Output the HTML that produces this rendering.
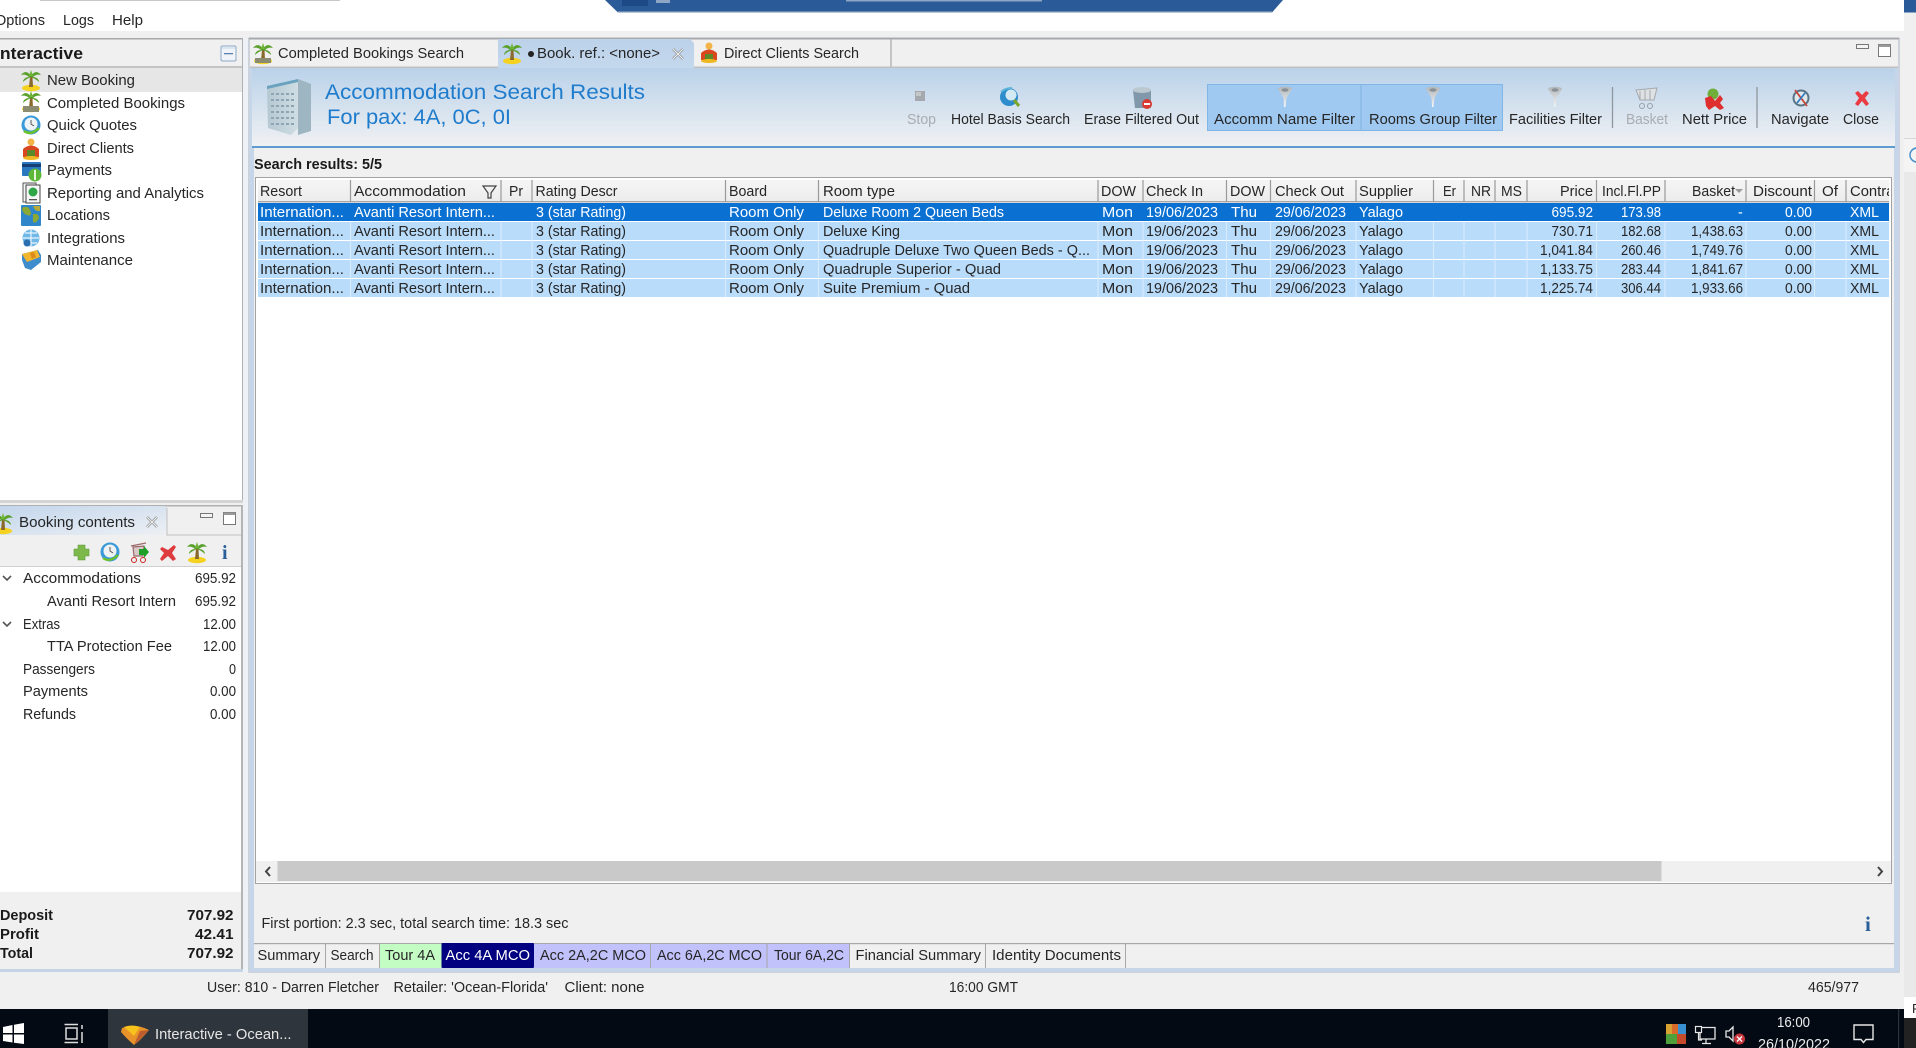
<!DOCTYPE html>
<html lang="en"><head><meta charset="utf-8"><title>Interactive - Ocean</title>
<style>
html,body{margin:0;padding:0;background:#f0f0f0;overflow:hidden;width:1916px;height:1048px}
svg{display:block;filter:blur(.3px)}
text{font-family:"Liberation Sans",sans-serif;font-size:14.3px;fill:#262626}
.b{font-weight:bold;fill:#1a1a1a}
.w{fill:#fff}
.g{fill:#a9adb1}
.h{font-size:21px;fill:#1f7ccc}
</style></head><body>
<svg width="1916" height="1048" viewBox="0 0 1916 1048" xmlns="http://www.w3.org/2000/svg">
<defs>
<linearGradient id="hd" x1="0" y1="0" x2="0" y2="1"><stop offset="0" stop-color="#bad2ea"/><stop offset="1" stop-color="#f0f1f3"/></linearGradient>
<linearGradient id="tb" x1="0" y1="0" x2="0" y2="1"><stop offset="0" stop-color="#bcd2ea"/><stop offset="1" stop-color="#c4d8ed"/></linearGradient>
<linearGradient id="tb2" x1="0" y1="0" x2="1" y2="1"><stop offset="0" stop-color="#c3d6ec"/><stop offset="1" stop-color="#edf0f4"/></linearGradient>
<linearGradient id="hdr" x1="0" y1="0" x2="0" y2="1"><stop offset="0" stop-color="#f5f5f5"/><stop offset="1" stop-color="#ececec"/></linearGradient>
<linearGradient id="bld" x1="0" y1="0" x2="1" y2="0"><stop offset="0" stop-color="#b5c8d2"/><stop offset="1" stop-color="#cfdde3"/></linearGradient>
<linearGradient id="fn" x1="0" y1="0" x2="0" y2="1"><stop offset="0" stop-color="#b2b7ba"/><stop offset="1" stop-color="#f3f5f6"/></linearGradient>
<g id="palm"><ellipse cx="0" cy="9" rx="9" ry="3.2" fill="#f4d21f"/><path d="M-1 -2 L1.5 -2 L2 8 L-2 8Z" fill="#8a6a2a"/><path d="M0 -3 C-3 -8 -7 -8 -10 -4 C-7 -5 -4 -4 -2 -2 C-5 -2 -8 0 -8 3 C-5 0 -2 -1 0 -2 C2 -1 5 0 8 3 C8 0 5 -2 2 -2 C4 -4 7 -5 10 -4 C7 -8 3 -8 0 -3Z" fill="#5aa02c"/><path d="M0 -9 L2 -3 L-2 -3Z" fill="#6fb536"/></g>
<g id="fun"><path d="M-7 -7 C-7 -10 7 -10 7 -7 L1.5 2 L0.5 11 L-1 11 L-1.5 2Z" fill="url(#fn)"/><ellipse cx="0" cy="-6" rx="3.500" ry="1.800" fill="#8b9297"/></g>
<clipPath id="r1"><rect x="258" y="203" width="1631" height="18"/></clipPath>
<clipPath id="r2"><rect x="258" y="222" width="1631" height="18"/></clipPath>
<clipPath id="r3"><rect x="258" y="241" width="1631" height="18"/></clipPath>
<clipPath id="r4"><rect x="258" y="260" width="1631" height="18"/></clipPath>
<clipPath id="r5"><rect x="258" y="279" width="1631" height="18"/></clipPath>
<clipPath id="hc"><rect x="1848" y="180" width="41" height="22"/></clipPath>
<clipPath id="dc"><rect x="1740" y="1010" width="110" height="38"/></clipPath>
</defs>

<!-- page base -->
<rect width="1916" height="1048" fill="#f0f0f0"/>
<rect width="1904" height="31" fill="#fff"/>
<path d="M605 0 L1283 0 L1272 12.5 L618 12.5Z" fill="#2a5a97"/>
<path d="M618 12 L1272 12" stroke="#8fa3bd" stroke-width="1.2"/>
<rect x="622" y="0" width="26" height="6" fill="#1d4a87"/>
<rect x="656" y="0" width="14" height="3" fill="#8ea6c6"/>
<rect x="846" y="0" width="196" height="1.500" fill="#8ea6c6"/>
<rect x="40" y="0" width="300" height="1" fill="#c8c8c8"/>
<rect x="1904" y="0" width="12" height="12.5" fill="#2a5a97"/>
<rect x="1904" y="12.5" width="12" height="126" fill="#f0f0f0"/>
<rect x="1904" y="138" width="12" height="1" fill="#d8d8d8"/>
<rect x="1904" y="139" width="12" height="33" fill="#f4f4f4"/>
<circle cx="1917" cy="155" r="7" fill="none" stroke="#4a90c8" stroke-width="1.5"/>
<rect x="1904" y="172" width="12" height="825" fill="#e9e9e9"/>
<rect x="1904" y="997" width="12" height="21" fill="#fff"/>
<text x="1912" y="1013" style="font-size:13px">F</text>
<rect x="1904" y="1018" width="12" height="30" fill="#222"/>

<!-- menu -->
<text x="-5" y="25" textLength="50" lengthAdjust="spacingAndGlyphs">Options</text>
<text x="63" y="25" textLength="31" lengthAdjust="spacingAndGlyphs">Logs</text>
<text x="112" y="25" textLength="31" lengthAdjust="spacingAndGlyphs">Help</text>

<!-- LEFT PANEL TOP -->
<rect x="0" y="38" width="243" height="462" fill="#fff"/>
<rect x="0" y="38" width="243" height="29" fill="#f0f0f0"/>
<rect x="0" y="38" width="243" height="1.5" fill="#a8a8a8"/>
<rect x="0" y="66" width="243" height="2" fill="#c4c4c4"/>
<rect x="242" y="38" width="1.5" height="462" fill="#b0b0b0"/>
<text class="b" x="-5" y="59" textLength="88" lengthAdjust="spacingAndGlyphs" style="font-size:17px">Interactive</text>
<rect x="221" y="46" width="15" height="15" rx="1.5" fill="#f0f4f9" stroke="#8ea8c6"/><rect x="224" y="53" width="9" height="1.3" fill="#5a82ae"/><rect x="222" y="47" width="13" height="2" fill="#dbe5f0"/>
<rect x="0" y="68" width="242" height="24" fill="#e6e6e6"/>

<use href="#palm" x="31" y="79"/>
<use href="#palm" x="31" y="100"/><rect x="23" y="106" width="16" height="6" fill="#8b8b70"/>
<circle cx="31" cy="125" r="9.5" fill="#3a9ad8"/><circle cx="31" cy="124" r="6.500" fill="#eef3f6"/><path d="M31 120 V124 L34 126" stroke="#555" fill="none"/><path d="M24 131 Q31 136 39 128" stroke="#6cc02a" stroke-width="2.5" fill="none"/>
<circle cx="31" cy="142" r="3.5" fill="#f2b347"/><path d="M23 149 Q31 142 39 149 L39 157 L23 157Z" fill="#d9471f"/><rect x="27" y="150" width="8" height="7" fill="#5c8a2a"/><ellipse cx="31" cy="158" rx="8" ry="2" fill="#f0b820"/>
<rect x="22" y="162" width="19" height="14" rx="1" fill="#2a78c0"/><rect x="22" y="164" width="19" height="3" fill="#143f70"/><circle cx="35" cy="175" r="6.5" fill="#5db83a"/><rect x="34" y="170" width="2" height="10" fill="#e8f7d8"/>
<rect x="23" y="183" width="13" height="19" fill="#f4f4f4" stroke="#555"/><rect x="26" y="185" width="14" height="18" fill="#f6f6f6" stroke="#444"/><circle cx="33" cy="192" r="4.5" fill="#2fa64a"/><rect x="29" y="199" width="8" height="1.3" fill="#555"/>
<rect x="21" y="205" width="20" height="21" rx="1" fill="#2f86c8"/><path d="M22 208 Q28 205 30 210 Q33 217 27 215 Q22 213 22 208Z M33 214 Q39 213 39 218 Q36 224 33 222Z" fill="#8ba832"/><path d="M33 206 L40 206 L40 211 Q35 212 33 206Z" fill="#b4a93a"/>
<circle cx="31" cy="238" r="8.5" fill="#6fb8e8"/><path d="M25 233 H37 M23 238 H39 M25 243 H37 M31 229 V247" stroke="#eaf5fc" stroke-width="1.2"/><circle cx="27" cy="243" r="3.5" fill="#2b6fb0"/>
<path d="M22 254 L38 250 L41 255 L41 262 L31 270 L25 268 L22 260Z" fill="#3f8ccc"/><path d="M22 254 L37 250 L40 257 L27 262Z" fill="#f1b62d"/><path d="M30 253 L34 252 L36 257 L32 259Z" fill="#d98a1a"/>

<text x="47" y="85" textLength="88" lengthAdjust="spacingAndGlyphs">New Booking</text>
<text x="47" y="108" textLength="138" lengthAdjust="spacingAndGlyphs">Completed Bookings</text>
<text x="47" y="130" textLength="90" lengthAdjust="spacingAndGlyphs">Quick Quotes</text>
<text x="47" y="153" textLength="87" lengthAdjust="spacingAndGlyphs">Direct Clients</text>
<text x="47" y="175" textLength="65" lengthAdjust="spacingAndGlyphs">Payments</text>
<text x="47" y="198" textLength="157" lengthAdjust="spacingAndGlyphs">Reporting and Analytics</text>
<text x="47" y="220" textLength="63" lengthAdjust="spacingAndGlyphs">Locations</text>
<text x="47" y="243" textLength="78" lengthAdjust="spacingAndGlyphs">Integrations</text>
<text x="47" y="265" textLength="86" lengthAdjust="spacingAndGlyphs">Maintenance</text>

<!-- LEFT PANEL BOTTOM -->
<rect x="0" y="500" width="243" height="3" fill="#d4d4d4"/>
<rect x="0" y="505" width="243" height="62" fill="#f0f0f0"/>
<rect x="0" y="505" width="243" height="1.5" fill="#b0b0b0"/>
<path d="M0 506 H165 L167 508 V535 H0Z" fill="url(#tb2)"/>
<path d="M167 508 V535 H243" stroke="#c0c0c0" fill="none"/>
<use href="#palm" x="3" y="522"/>
<text x="19" y="527" textLength="116" lengthAdjust="spacingAndGlyphs">Booking contents</text>
<path d="M147 517 L157 527 M157 517 L147 527" stroke="#8e9296" stroke-width="2.6"/><path d="M147 517 L157 527 M157 517 L147 527" stroke="#f4f4f4" stroke-width="1"/>
<rect x="200.500" y="513.500" width="12" height="4" fill="#f4f4f4" stroke="#777"/>
<rect x="223.500" y="512.500" width="12" height="12" fill="#fff" stroke="#777"/><rect x="223.500" y="512.500" width="12" height="2.500" fill="#999"/>
<rect x="0" y="567" width="241" height="325" fill="#fff"/>
<rect x="0" y="566" width="241" height="1" fill="#d0d0d0"/>
<rect x="241" y="505" width="2" height="465" fill="#b4b4b4"/>
<path d="M78 545 H85 V549 H89 V556 H85 V560 H78 V556 H74 V549 H78Z" fill="#7cb84a" stroke="#5f9a38" stroke-width=".6"/>
<circle cx="110" cy="552" r="9.5" fill="#3a9ad8"/><circle cx="110" cy="551" r="6.500" fill="#eef2f4"/><path d="M110 547 V551 L113 553" stroke="#555" fill="none"/><path d="M103 558 Q110 563 118 555" stroke="#6cc02a" stroke-width="2.2" fill="none"/>
<path d="M131 546 L146 543 M133 547 L144 546 L143 556 L134 556Z" stroke="#9a6a6a" fill="#d8c8c8" stroke-width="1.2"/><circle cx="134" cy="560" r="2.5" fill="none" stroke="#c22"/><circle cx="143" cy="560" r="2.5" fill="none" stroke="#c22"/><path d="M139 549 H144 V546 L149 552 L144 558 V555 H139Z" fill="#1ea028"/>
<path d="M162 547 L168 550 L174 545 L176 547 L172 553 L176 559 L173 561 L168 556 L162 561 L160 559 L164 553 L160 549Z" fill="#de3b3f"/>
<use href="#palm" x="197" y="551"/>
<text x="222" y="559" style="font-family:'Liberation Serif',serif;font-weight:bold;font-size:20px;fill:#2a6099">i</text>

<path d="M3 576 L7 580 L11 576 M3 622 L7 626 L11 622" stroke="#555" stroke-width="1.6" fill="none"/>
<text x="23" y="583" textLength="118" lengthAdjust="spacingAndGlyphs">Accommodations</text>
<text x="195" y="583" textLength="41" lengthAdjust="spacingAndGlyphs">695.92</text>
<text x="47" y="606" textLength="129" lengthAdjust="spacingAndGlyphs">Avanti Resort Intern</text>
<text x="195" y="606" textLength="41" lengthAdjust="spacingAndGlyphs">695.92</text>
<text x="23" y="629" textLength="37" lengthAdjust="spacingAndGlyphs">Extras</text>
<text x="203" y="629" textLength="33" lengthAdjust="spacingAndGlyphs">12.00</text>
<text x="47" y="651" textLength="125" lengthAdjust="spacingAndGlyphs">TTA Protection Fee</text>
<text x="203" y="651" textLength="33" lengthAdjust="spacingAndGlyphs">12.00</text>
<text x="23" y="674" textLength="72" lengthAdjust="spacingAndGlyphs">Passengers</text>
<text x="229" y="674" textLength="7" lengthAdjust="spacingAndGlyphs">0</text>
<text x="23" y="696" textLength="65" lengthAdjust="spacingAndGlyphs">Payments</text>
<text x="210" y="696" textLength="26" lengthAdjust="spacingAndGlyphs">0.00</text>
<text x="23" y="719" textLength="53" lengthAdjust="spacingAndGlyphs">Refunds</text>
<text x="210" y="719" textLength="26" lengthAdjust="spacingAndGlyphs">0.00</text>

<text class="b" x="0" y="920" textLength="53" lengthAdjust="spacingAndGlyphs">Deposit</text>
<text class="b" x="187" y="920" textLength="46.500" lengthAdjust="spacingAndGlyphs">707.92</text>
<text class="b" x="0" y="939" textLength="39" lengthAdjust="spacingAndGlyphs">Profit</text>
<text class="b" x="195" y="939" textLength="38.500" lengthAdjust="spacingAndGlyphs">42.41</text>
<text class="b" x="0" y="958" textLength="33" lengthAdjust="spacingAndGlyphs">Total</text>
<text class="b" x="187" y="958" textLength="46.500" lengthAdjust="spacingAndGlyphs">707.92</text>
<rect x="0" y="969" width="243" height="3" fill="#c5d5e6"/>
<rect x="243" y="38" width="5" height="934" fill="#eef1f5"/>

<!-- RIGHT PANEL -->
<rect x="249" y="38" width="1650" height="934" fill="#f0f0f0" stroke="#a9b4bf" stroke-width="1"/>
<rect x="249" y="38" width="1650" height="1.500" fill="#a8a8a8"/>
<rect x="249" y="68" width="5" height="904" fill="#c6d6e8"/>
<rect x="1894" y="68" width="5" height="904" fill="#c6d6e8"/>
<path d="M498 68 V39 H690 L694 43 V68Z" fill="url(#tb)"/>
<path d="M891 39 V67" stroke="#a8a8a8" stroke-width="1.200"/>
<rect x="250" y="66.500" width="248" height="1.500" fill="#c0c0c0"/>
<rect x="694" y="66.500" width="1204" height="1.500" fill="#c0c0c0"/>
<use href="#palm" x="263" y="52"/><rect x="255" y="58" width="16" height="5" fill="#8b8b70"/>
<text x="278" y="58" textLength="186" lengthAdjust="spacingAndGlyphs">Completed Bookings Search</text>
<use href="#palm" x="512" y="52"/>
<circle cx="531" cy="54" r="3" fill="#222"/>
<text x="537" y="58" textLength="123" lengthAdjust="spacingAndGlyphs">Book. ref.: &lt;none&gt;</text>
<path d="M673 49 L683 59 M683 49 L673 59" stroke="#8e9296" stroke-width="2.600"/><path d="M673 49 L683 59 M683 49 L673 59" stroke="#f4f4f4" stroke-width="1"/>
<circle cx="709" cy="46" r="3.500" fill="#f2b347"/><path d="M701 53 Q709 46 717 53 L717 60 L701 60Z" fill="#d9471f"/><rect x="705" y="54" width="8" height="6" fill="#5c8a2a"/><ellipse cx="709" cy="61" rx="8" ry="2" fill="#f0b820"/>
<text x="724" y="58" textLength="135" lengthAdjust="spacingAndGlyphs">Direct Clients Search</text>
<rect x="1856.500" y="44.500" width="12" height="4" fill="#f4f4f4" stroke="#777"/>
<rect x="1878.500" y="44.500" width="12" height="12" fill="#fff" stroke="#777"/><rect x="1878.500" y="44.500" width="12" height="2.500" fill="#999"/>

<!-- Header band -->
<rect x="252" y="68" width="1643" height="78" fill="url(#hd)"/>
<rect x="252" y="146" width="1643" height="2" fill="#5d9bd0"/>
<path d="M267 86 L298 79 L298 128 L291 135 L268 128Z" fill="url(#bld)"/>
<path d="M298 79 L311 84 L311 131 L298 135Z" fill="#9eb6c2"/>
<path d="M267 86 L298 79 L298 82 L267 89Z" fill="#6aa2c0"/>
<path d="M271 94 H295 M271 100 H295 M271 106 H295 M271 112 H295 M271 118 H295 M271 124 H295" stroke="#8ea6b3" stroke-width="2" stroke-dasharray="3 2"/>
<text class="h" x="325" y="99" textLength="320" lengthAdjust="spacingAndGlyphs">Accommodation Search Results</text>
<text class="h" x="327" y="124" textLength="184" lengthAdjust="spacingAndGlyphs">For pax: 4A, 0C, 0I</text>

<!-- toolbar -->
<rect x="1207.500" y="84.500" width="295" height="46" fill="#9fc9f0" stroke="#82b6e6"/>
<path d="M1361 85 V130" stroke="#7fb2e2"/>
<rect x="915" y="91" width="10" height="10" fill="#a5a9ad"/><rect x="916" y="92" width="5" height="4" fill="#c4c6c8"/>
<circle cx="1009" cy="97" r="9" fill="#2d8ccc"/><circle cx="1011" cy="95" r="5.500" fill="#d4eaf2"/><path d="M1014 100 L1019 106" stroke="#7aa62a" stroke-width="3"/><path d="M1001 92 Q1005 88 1012 88" stroke="#5cb5d8" stroke-width="2" fill="none"/>
<path d="M1133 90 Q1142 86 1151 90 L1151 108 L1135 108 Z" fill="#8098aa"/><ellipse cx="1142" cy="90" rx="9" ry="3" fill="#bcc8d0"/><circle cx="1147" cy="104" r="5" fill="#d93a32"/><rect x="1144" y="103" width="6" height="2" fill="#fff"/>
<use href="#fun" x="1285" y="96"/>
<use href="#fun" x="1433" y="96"/>
<use href="#fun" x="1555" y="96"/>
<path d="M1612.500 87 V128 M1757 87 V128" stroke="#8f979e" stroke-width="1.300"/>
<path d="M1636 90 L1657 88 L1654 100 L1640 100Z M1640 91 V100 M1645 90 V100 M1650 90 V100" fill="#dfe2e5" stroke="#a3a8ad"/><circle cx="1642" cy="106" r="2.500" fill="none" stroke="#9a9fa4"/><circle cx="1650" cy="106" r="2.500" fill="none" stroke="#9a9fa4"/>
<circle cx="1713" cy="94" r="5.500" fill="#6fae38"/><path d="M1705 98 L1711 96 L1715 101 L1720 95 L1723 99 L1720 103 L1724 108 L1720 110 L1715 106 L1709 110 L1706 106Z" fill="#df2e2e"/>
<circle cx="1801" cy="98" r="7.500" fill="#dfe8ec" stroke="#5a7484" stroke-width="2"/><path d="M1795 90 L1807 106" stroke="#c6443a" stroke-width="1.800"/><path d="M1797 103 L1805 93" stroke="#2f7cc4" stroke-width="1.800"/>
<path d="M1855 93 L1858 91 L1862 95 L1866 91 L1869 93 L1865 98 L1869 104 L1866 106 L1862 101 L1858 106 L1855 104 L1859 98Z" fill="#ea3a42"/>

<text class="g" x="907" y="124" textLength="29" lengthAdjust="spacingAndGlyphs">Stop</text>
<text x="951" y="124" textLength="119" lengthAdjust="spacingAndGlyphs">Hotel Basis Search</text>
<text x="1084" y="124" textLength="115" lengthAdjust="spacingAndGlyphs">Erase Filtered Out</text>
<text x="1214" y="124" textLength="141" lengthAdjust="spacingAndGlyphs">Accomm Name Filter</text>
<text x="1369" y="124" textLength="128" lengthAdjust="spacingAndGlyphs">Rooms Group Filter</text>
<text x="1509" y="124" textLength="93" lengthAdjust="spacingAndGlyphs">Facilities Filter</text>
<text class="g" x="1626" y="124" textLength="42" lengthAdjust="spacingAndGlyphs">Basket</text>
<text x="1682" y="124" textLength="65" lengthAdjust="spacingAndGlyphs">Nett Price</text>
<text x="1771" y="124" textLength="58" lengthAdjust="spacingAndGlyphs">Navigate</text>
<text x="1843" y="124" textLength="36" lengthAdjust="spacingAndGlyphs">Close</text>

<text class="b" x="254" y="169" textLength="128" lengthAdjust="spacingAndGlyphs">Search results: 5/5</text>

<!-- TABLE -->
<rect x="255.500" y="177.500" width="1636" height="706" fill="#fff" stroke="#a3a3a3"/>
<rect x="258" y="180" width="1631" height="21" fill="url(#hdr)"/>
<rect x="258" y="201" width="1631" height="1.500" fill="#a8a8a8"/>
<rect x="258" y="203" width="1631" height="18" fill="#0a70d2"/>
<rect x="258" y="222" width="1631" height="18" fill="#badcfb"/>
<rect x="258" y="241" width="1631" height="18" fill="#badcfb"/>
<rect x="258" y="260" width="1631" height="18" fill="#badcfb"/>
<rect x="258" y="279" width="1631" height="18" fill="#badcfb"/>
<path d="M350.500 180V202 M501 180V202 M532 180V202 M725.500 180V202 M818.500 180V202 M1098 180V202 M1143 180V202 M1226.500 180V202 M1270.500 180V202 M1356 180V202 M1433.500 180V202 M1464 180V202 M1495 180V202 M1527 180V202 M1596.500 180V202 M1665 180V202 M1746 180V202 M1814.500 180V202 M1846 180V202" stroke="#9a9a9a" stroke-width="1.200"/>
<path d="M350.500 222V297 M501 222V297 M532 222V297 M725.500 222V297 M818.500 222V297 M1098 222V297 M1143 222V297 M1226.500 222V297 M1270.500 222V297 M1356 222V297 M1433.500 222V297 M1464 222V297 M1495 222V297 M1527 222V297 M1596.500 222V297 M1665 222V297 M1746 222V297 M1814.500 222V297 M1846 222V297" stroke="#d8ecfd" stroke-width="1"/>
<text x="260" y="196" textLength="42" lengthAdjust="spacingAndGlyphs">Resort</text>
<text x="354" y="196" textLength="112" lengthAdjust="spacingAndGlyphs">Accommodation</text>
<path d="M483 186 H496 L491 193 V198 L488 198 V193Z" fill="none" stroke="#444" stroke-width="1.200"/>
<text x="509" y="196" textLength="14" lengthAdjust="spacingAndGlyphs">Pr</text>
<text x="535.500" y="196" textLength="82" lengthAdjust="spacingAndGlyphs">Rating Descr</text>
<text x="729" y="196" textLength="38" lengthAdjust="spacingAndGlyphs">Board</text>
<text x="823" y="196" textLength="72" lengthAdjust="spacingAndGlyphs">Room type</text>
<text x="1101" y="196" textLength="35" lengthAdjust="spacingAndGlyphs">DOW</text>
<text x="1146" y="196" textLength="57" lengthAdjust="spacingAndGlyphs">Check In</text>
<text x="1230" y="196" textLength="35" lengthAdjust="spacingAndGlyphs">DOW</text>
<text x="1275" y="196" textLength="69" lengthAdjust="spacingAndGlyphs">Check Out</text>
<text x="1359" y="196" textLength="54" lengthAdjust="spacingAndGlyphs">Supplier</text>
<text x="1443" y="196" textLength="13" lengthAdjust="spacingAndGlyphs">Er</text>
<text x="1471" y="196" textLength="20" lengthAdjust="spacingAndGlyphs">NR</text>
<text x="1501" y="196" textLength="21" lengthAdjust="spacingAndGlyphs">MS</text>
<text x="1560" y="196" textLength="33" lengthAdjust="spacingAndGlyphs">Price</text>
<text x="1602" y="196" textLength="59" lengthAdjust="spacingAndGlyphs">Incl.Fl.PP</text>
<text x="1692" y="196" textLength="43" lengthAdjust="spacingAndGlyphs">Basket</text>
<path d="M1735 189 H1743 L1739 193Z" fill="#9a9a9a"/>
<text x="1753" y="196" textLength="59" lengthAdjust="spacingAndGlyphs">Discount</text>
<text x="1822" y="196" textLength="16" lengthAdjust="spacingAndGlyphs">Of</text>
<g clip-path="url(#hc)"><text x="1850" y="196" textLength="56" lengthAdjust="spacingAndGlyphs">Contract</text></g>

<g clip-path="url(#r1)">
<text class="w" x="260" y="217" textLength="84" lengthAdjust="spacingAndGlyphs">Internation...</text>
<text class="w" x="354" y="217" textLength="141" lengthAdjust="spacingAndGlyphs">Avanti Resort Intern...</text>
<text class="w" x="536" y="217" textLength="90" lengthAdjust="spacingAndGlyphs">3 (star Rating)</text>
<text class="w" x="729" y="217" textLength="75" lengthAdjust="spacingAndGlyphs">Room Only</text>
<text class="w" x="823" y="217" textLength="181" lengthAdjust="spacingAndGlyphs">Deluxe Room 2 Queen Beds</text>
<text class="w" x="1102" y="217" textLength="31" lengthAdjust="spacingAndGlyphs">Mon</text>
<text class="w" x="1146" y="217" textLength="72" lengthAdjust="spacingAndGlyphs">19/06/2023</text>
<text class="w" x="1231" y="217" textLength="26" lengthAdjust="spacingAndGlyphs">Thu</text>
<text class="w" x="1275" y="217" textLength="71" lengthAdjust="spacingAndGlyphs">29/06/2023</text>
<text class="w" x="1359" y="217" textLength="44" lengthAdjust="spacingAndGlyphs">Yalago</text>
<text class="w" x="1551.500" y="217" textLength="41.500" lengthAdjust="spacingAndGlyphs">695.92</text>
<text class="w" x="1621" y="217" textLength="40" lengthAdjust="spacingAndGlyphs">173.98</text>
<text class="w" x="1738" y="217">-</text>
<text class="w" x="1785" y="217" textLength="27" lengthAdjust="spacingAndGlyphs">0.00</text>
<text class="w" x="1850" y="217" textLength="29" lengthAdjust="spacingAndGlyphs">XML</text>
</g>
<g clip-path="url(#r2)">
<text x="260" y="236" textLength="84" lengthAdjust="spacingAndGlyphs">Internation...</text>
<text x="354" y="236" textLength="141" lengthAdjust="spacingAndGlyphs">Avanti Resort Intern...</text>
<text x="536" y="236" textLength="90" lengthAdjust="spacingAndGlyphs">3 (star Rating)</text>
<text x="729" y="236" textLength="75" lengthAdjust="spacingAndGlyphs">Room Only</text>
<text x="823" y="236" textLength="77" lengthAdjust="spacingAndGlyphs">Deluxe King</text>
<text x="1102" y="236" textLength="31" lengthAdjust="spacingAndGlyphs">Mon</text>
<text x="1146" y="236" textLength="72" lengthAdjust="spacingAndGlyphs">19/06/2023</text>
<text x="1231" y="236" textLength="26" lengthAdjust="spacingAndGlyphs">Thu</text>
<text x="1275" y="236" textLength="71" lengthAdjust="spacingAndGlyphs">29/06/2023</text>
<text x="1359" y="236" textLength="44" lengthAdjust="spacingAndGlyphs">Yalago</text>
<text x="1551.500" y="236" textLength="41.500" lengthAdjust="spacingAndGlyphs">730.71</text>
<text x="1621" y="236" textLength="40" lengthAdjust="spacingAndGlyphs">182.68</text>
<text x="1691" y="236" textLength="52" lengthAdjust="spacingAndGlyphs">1,438.63</text>
<text x="1785" y="236" textLength="27" lengthAdjust="spacingAndGlyphs">0.00</text>
<text x="1850" y="236" textLength="29" lengthAdjust="spacingAndGlyphs">XML</text>
</g>
<g clip-path="url(#r3)">
<text x="260" y="255" textLength="84" lengthAdjust="spacingAndGlyphs">Internation...</text>
<text x="354" y="255" textLength="141" lengthAdjust="spacingAndGlyphs">Avanti Resort Intern...</text>
<text x="536" y="255" textLength="90" lengthAdjust="spacingAndGlyphs">3 (star Rating)</text>
<text x="729" y="255" textLength="75" lengthAdjust="spacingAndGlyphs">Room Only</text>
<text x="823" y="255" textLength="267" lengthAdjust="spacingAndGlyphs">Quadruple Deluxe Two Queen Beds - Q...</text>
<text x="1102" y="255" textLength="31" lengthAdjust="spacingAndGlyphs">Mon</text>
<text x="1146" y="255" textLength="72" lengthAdjust="spacingAndGlyphs">19/06/2023</text>
<text x="1231" y="255" textLength="26" lengthAdjust="spacingAndGlyphs">Thu</text>
<text x="1275" y="255" textLength="71" lengthAdjust="spacingAndGlyphs">29/06/2023</text>
<text x="1359" y="255" textLength="44" lengthAdjust="spacingAndGlyphs">Yalago</text>
<text x="1540" y="255" textLength="53" lengthAdjust="spacingAndGlyphs">1,041.84</text>
<text x="1621" y="255" textLength="40" lengthAdjust="spacingAndGlyphs">260.46</text>
<text x="1691" y="255" textLength="52" lengthAdjust="spacingAndGlyphs">1,749.76</text>
<text x="1785" y="255" textLength="27" lengthAdjust="spacingAndGlyphs">0.00</text>
<text x="1850" y="255" textLength="29" lengthAdjust="spacingAndGlyphs">XML</text>
</g>
<g clip-path="url(#r4)">
<text x="260" y="274" textLength="84" lengthAdjust="spacingAndGlyphs">Internation...</text>
<text x="354" y="274" textLength="141" lengthAdjust="spacingAndGlyphs">Avanti Resort Intern...</text>
<text x="536" y="274" textLength="90" lengthAdjust="spacingAndGlyphs">3 (star Rating)</text>
<text x="729" y="274" textLength="75" lengthAdjust="spacingAndGlyphs">Room Only</text>
<text x="823" y="274" textLength="178" lengthAdjust="spacingAndGlyphs">Quadruple Superior - Quad</text>
<text x="1102" y="274" textLength="31" lengthAdjust="spacingAndGlyphs">Mon</text>
<text x="1146" y="274" textLength="72" lengthAdjust="spacingAndGlyphs">19/06/2023</text>
<text x="1231" y="274" textLength="26" lengthAdjust="spacingAndGlyphs">Thu</text>
<text x="1275" y="274" textLength="71" lengthAdjust="spacingAndGlyphs">29/06/2023</text>
<text x="1359" y="274" textLength="44" lengthAdjust="spacingAndGlyphs">Yalago</text>
<text x="1540" y="274" textLength="53" lengthAdjust="spacingAndGlyphs">1,133.75</text>
<text x="1621" y="274" textLength="40" lengthAdjust="spacingAndGlyphs">283.44</text>
<text x="1691" y="274" textLength="52" lengthAdjust="spacingAndGlyphs">1,841.67</text>
<text x="1785" y="274" textLength="27" lengthAdjust="spacingAndGlyphs">0.00</text>
<text x="1850" y="274" textLength="29" lengthAdjust="spacingAndGlyphs">XML</text>
</g>
<g clip-path="url(#r5)">
<text x="260" y="293" textLength="84" lengthAdjust="spacingAndGlyphs">Internation...</text>
<text x="354" y="293" textLength="141" lengthAdjust="spacingAndGlyphs">Avanti Resort Intern...</text>
<text x="536" y="293" textLength="90" lengthAdjust="spacingAndGlyphs">3 (star Rating)</text>
<text x="729" y="293" textLength="75" lengthAdjust="spacingAndGlyphs">Room Only</text>
<text x="823" y="293" textLength="147" lengthAdjust="spacingAndGlyphs">Suite Premium - Quad</text>
<text x="1102" y="293" textLength="31" lengthAdjust="spacingAndGlyphs">Mon</text>
<text x="1146" y="293" textLength="72" lengthAdjust="spacingAndGlyphs">19/06/2023</text>
<text x="1231" y="293" textLength="26" lengthAdjust="spacingAndGlyphs">Thu</text>
<text x="1275" y="293" textLength="71" lengthAdjust="spacingAndGlyphs">29/06/2023</text>
<text x="1359" y="293" textLength="44" lengthAdjust="spacingAndGlyphs">Yalago</text>
<text x="1540" y="293" textLength="53" lengthAdjust="spacingAndGlyphs">1,225.74</text>
<text x="1621" y="293" textLength="40" lengthAdjust="spacingAndGlyphs">306.44</text>
<text x="1691" y="293" textLength="52" lengthAdjust="spacingAndGlyphs">1,933.66</text>
<text x="1785" y="293" textLength="27" lengthAdjust="spacingAndGlyphs">0.00</text>
<text x="1850" y="293" textLength="29" lengthAdjust="spacingAndGlyphs">XML</text>
</g>

<!-- scrollbar -->
<rect x="256" y="861" width="1635" height="21" fill="#f0f0f0"/>
<rect x="277.500" y="861" width="1384" height="20" fill="#c9c9c9"/>
<path d="M270 867 L266 871.500 L270 876 M1878 867 L1882 871.500 L1878 876" stroke="#444" stroke-width="2" fill="none"/>

<text x="261.500" y="928" textLength="307" lengthAdjust="spacingAndGlyphs">First portion: 2.3 sec, total search time: 18.3 sec</text>
<text x="1865" y="931" style="font-family:'Liberation Serif',serif;font-weight:bold;font-size:21px;fill:#2a6099">i</text>

<!-- bottom tabs -->
<rect x="254" y="943" width="1640" height="1.200" fill="#a8a8a8"/>
<rect x="380" y="944" width="62" height="24" fill="#c4fdc4"/>
<rect x="441.500" y="943" width="92.500" height="25" rx="1" fill="#000080"/>
<rect x="534" y="944" width="116" height="24" fill="#c1c1fc"/>
<rect x="651" y="944" width="116" height="24" fill="#c1c1fc"/>
<rect x="767.500" y="944" width="82" height="24" fill="#c1c1fc"/>
<path d="M325.500 944V968 M379.500 944V968 M650.500 944V968 M767 944V968 M849.500 944V968 M985.500 944V968 M1125.500 944V968" stroke="#a8a8a8"/>
<rect x="254" y="968" width="1645" height="4" fill="#c6d6e8"/>
<text x="257.500" y="960" textLength="62.500" lengthAdjust="spacingAndGlyphs">Summary</text>
<text x="330.500" y="960" textLength="43" lengthAdjust="spacingAndGlyphs">Search</text>
<text x="385" y="960" textLength="50" lengthAdjust="spacingAndGlyphs">Tour 4A</text>
<text class="w" x="445.500" y="960" textLength="84.500" lengthAdjust="spacingAndGlyphs">Acc 4A MCO</text>
<text x="540" y="960" textLength="106" lengthAdjust="spacingAndGlyphs">Acc 2A,2C MCO</text>
<text x="657" y="960" textLength="105" lengthAdjust="spacingAndGlyphs">Acc 6A,2C MCO</text>
<text x="774" y="960" textLength="70" lengthAdjust="spacingAndGlyphs">Tour 6A,2C</text>
<text x="855.500" y="960" textLength="125.500" lengthAdjust="spacingAndGlyphs">Financial Summary</text>
<text x="992" y="960" textLength="129" lengthAdjust="spacingAndGlyphs">Identity Documents</text>

<!-- status -->
<text x="207" y="992" textLength="172" lengthAdjust="spacingAndGlyphs">User: 810 - Darren Fletcher</text>
<text x="393.500" y="992" textLength="154.500" lengthAdjust="spacingAndGlyphs">Retailer: 'Ocean-Florida'</text>
<text x="564.500" y="992" textLength="80" lengthAdjust="spacingAndGlyphs">Client: none</text>
<text x="949" y="992" textLength="69" lengthAdjust="spacingAndGlyphs">16:00 GMT</text>
<text x="1808" y="992" textLength="51" lengthAdjust="spacingAndGlyphs">465/977</text>

<!-- taskbar -->
<rect x="0" y="1009" width="1904" height="39" fill="#030a13"/>
<rect x="1898" y="1009" width="1.200" height="39" fill="#2d3238"/>
<rect x="108" y="1009" width="200" height="39" fill="#2f353c"/>
<path d="M3 1027 L12.500 1025 V1033 H3Z M14 1024.700 L24 1023 V1033 H14Z M3 1034.500 H12.500 V1042.500 L3 1041Z M14 1034.500 H24 V1044 L14 1042.700Z" fill="#fff"/>
<path d="M64.500 1024.500 H78 M64.500 1042.500 H78" stroke="#ddd" stroke-width="1.400"/><rect x="66" y="1028" width="11" height="11" fill="none" stroke="#ddd" stroke-width="1.500"/><path d="M82 1025 V1029 M82 1032 V1043" stroke="#ddd" stroke-width="1.500"/>
<path d="M122 1028 Q135 1023 149 1030 Q141 1040 134 1045 Q126 1038 121 1032Z" fill="#e8932a"/><path d="M124 1027 Q132 1024 140 1027 L134 1036Z" fill="#f7c21c"/><path d="M134 1045 Q141 1039 149 1030 L140 1031Z" fill="#bd5e2f"/>
<text x="155" y="1039" textLength="136.500" lengthAdjust="spacingAndGlyphs" style="fill:#e6e6e6">Interactive - Ocean...</text>
<rect x="1666" y="1024" width="6" height="10" fill="#d8a232"/><rect x="1672" y="1024" width="6" height="10" fill="#d96b2a"/><rect x="1678" y="1024" width="8" height="10" fill="#3890d0"/>
<rect x="1666" y="1034" width="11" height="10" fill="#4ea03a"/><rect x="1677" y="1034" width="9" height="10" fill="#c44a2a"/>
<path d="M1702 1027.500 H1715 V1039 H1700 V1033 M1706 1039 V1043 M1702 1043.500 H1711" stroke="#e6e6e6" stroke-width="1.300" fill="none"/><rect x="1695.500" y="1026.500" width="6" height="6" fill="none" stroke="#e6e6e6" stroke-width="1.200"/><path d="M1698.500 1032 V1040 H1702" stroke="#e6e6e6" stroke-width="1.200" fill="none"/>
<path d="M1726 1031 H1729 L1733 1027 V1041 L1729 1037 H1726Z" fill="none" stroke="#e6e6e6" stroke-width="1.300"/>
<circle cx="1739.500" cy="1039" r="5.500" fill="#c8353c"/><path d="M1737 1036.500 L1742 1041.500 M1742 1036.500 L1737 1041.500" stroke="#fff" stroke-width="1.300"/>
<text x="1777" y="1027" textLength="33" lengthAdjust="spacingAndGlyphs" style="fill:#eee">16:00</text>
<g clip-path="url(#dc)"><text x="1758" y="1049" textLength="72" lengthAdjust="spacingAndGlyphs" style="fill:#eee">26/10/2022</text></g>
<path d="M1854 1025 H1873 V1039.500 H1866 L1863.500 1042.500 L1861 1039.500 H1854Z" fill="none" stroke="#e6e6e6" stroke-width="1.400"/>
</svg>
</body></html>
